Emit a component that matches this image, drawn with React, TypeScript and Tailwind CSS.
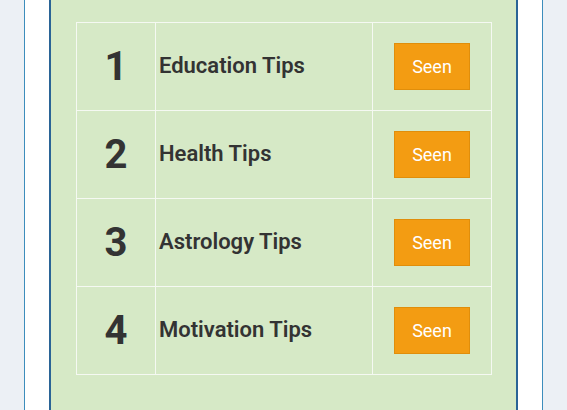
import React from 'react';

const tips = [
  { id: 1, title: 'Education Tips' },
  { id: 2, title: 'Health Tips' },
  { id: 3, title: 'Astrology Tips' },
  { id: 4, title: 'Motivation Tips' },
];

function TipRow({ id, title }: { id: number; title: string }) {
  return (
    <tr className="h-[88px]">
      <td className="w-[79px] border border-[#f5f9f2] text-center align-middle text-[40px] font-bold text-[#333333]">
        {id}
      </td>
      <td className="w-[217px] border border-[#f5f9f2] pb-[3px] pl-[3px] align-middle text-[22px] font-semibold text-[#333333]">
        {title}
      </td>
      <td className="border border-[#f5f9f2] text-center align-middle">
        <button className="h-[47px] w-[76px] border border-[#e08e0b] bg-[#f39c12] text-[18px] text-white">
          Seen
        </button>
      </td>
    </tr>
  );
}

export default function App() {
  return (
    <div
      className="flex h-[410px] w-[567px] overflow-hidden bg-[#ecf0f5] px-[24px]"
      style={{ fontFamily: 'Roboto, "Liberation Sans", sans-serif' }}
    >
      <div className="flex flex-1 border-x border-[#3c8dbc] bg-white px-[24px]">
        <div className="flex-1 border-x-[2px] border-[#2a6496] bg-[#d6e9c6] pl-[25px] pr-[24px] pt-[22px]">
          <table className="w-full border-collapse">
            <tbody>
              {tips.map((t) => (
                <TipRow key={t.id} id={t.id} title={t.title} />
              ))}
            </tbody>
          </table>
        </div>
      </div>
    </div>
  );
}
